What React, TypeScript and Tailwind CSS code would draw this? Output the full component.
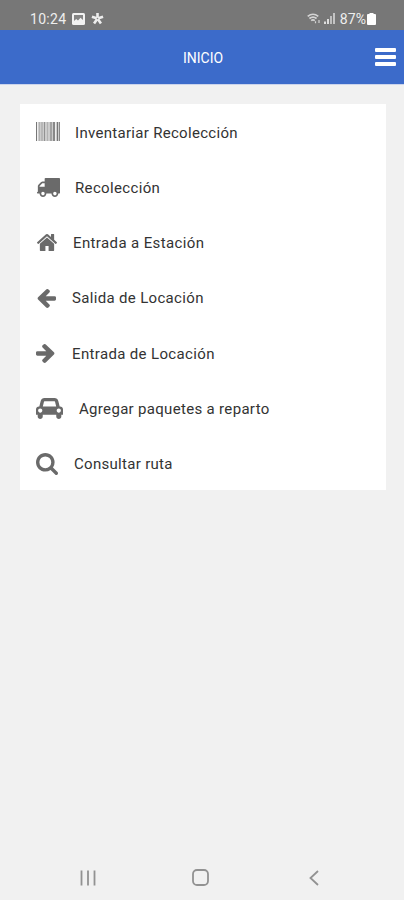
import React from "react";

type IconProps = { viewBox: string; d: string; className: string };

function Glyph({ viewBox, d, className }: IconProps) {
  return (
    <svg viewBox={viewBox} preserveAspectRatio="none" fill="currentColor" className={className}>
      <path d={d} />
    </svg>
  );
}

const TRUCK =
  "M640 1408q0-52-38-90t-90-38-90 38-38 90 38 90 90 38 90-38 38-90zm-384-512h384v-256h-158q-13 0-22 9l-195 195q-9 9-9 22v30zm1280 512q0-52-38-90t-90-38-90 38-38 90 38 90 90 38 90-38 38-90zm256-1088v1024q0 15-4 26.5t-13.5 18.5-16.5 11.5-23.5 6-22.5 2-25.5 0-22.5-.5q0 106-75 181t-181 75-181-75-75-181h-384q0 106-75 181t-181 75-181-75-75-181h-64q-3 0-22.5.5t-25.5 0-22.5-2-23.5-6-16.5-11.5-13.5-18.5-4-26.5q0-26 19-45t45-19v-320q0-8-.5-35t0-38 2.5-34.5 6.5-37 14-30.5 22.5-30l198-198q19-19 50.5-32t58.5-13h160v-192q0-26 19-45t45-19h1024q26 0 45 19t19 45z";
const HOME =
  "M1472 992v480q0 26-19 45t-45 19h-384v-384h-256v384h-384q-26 0-45-19t-19-45v-480q0-1 .5-3t.5-3l575-474 575 474q1 2 1 6zm223-69l-62 74q-8 9-21 11h-3q-13 0-21-7l-692-577-692 577q-12 8-24 7-13-2-21-11l-62-74q-8-10-7-23.5t11-21.5l719-599q32-26 76-26t76 26l244 204v-195q0-14 9-23t23-9h192q14 0 23 9t9 23v408l219 182q10 8 11 21.5t-7 23.5z";
const ARROW =
  "M1664 896v128q0 53-32.5 90.5t-84.5 37.5h-704l293 294q38 36 38 90t-38 90l-75 76q-37 37-90 37-52 0-91-37l-651-652q-37-37-37-90 0-52 37-91l651-650q38-38 91-38 52 0 90 38l75 74q38 38 38 91t-38 91l-293 293h704q52 0 84.5 37.5t32.5 90.5z";
const CAR =
  "M480 1088q0-66-47-113t-113-47-113 47-47 113 47 113 113 47 113-47 47-113zm36-320h1016l-89-357q-2-8-14-17.5t-21-9.5h-768q-9 0-21 9.5t-14 17.5zm1372 320q0-66-47-113t-113-47-113 47-47 113 47 113 113 47 113-47 47-113zm160-96v384q0 14-9 23t-23 9h-96v128q0 80-56 136t-136 56-136-56-56-136v-128h-1024v128q0 80-56 136t-136 56-136-56-56-136v-128h-96q-14 0-23-9t-9-23v-384q0-93 65.5-158.5t158.5-65.5h28l105-419q23-94 104-157.5t179-63.5h768q98 0 179 63.5t104 157.5l105 419h28q93 0 158.5 65.5t65.5 158.5z";
const SEARCH =
  "M1216 832q0-185-131.5-316.5t-316.5-131.5-316.5 131.5-131.5 316.5 131.5 316.5 316.5 131.5 316.5-131.5 131.5-316.5zm512 832q0 52-38 90t-90 38q-54 0-90-38l-343-342q-179 124-399 124-143 0-273.5-55.5t-225-150-150-225-55.5-273.5 55.5-273.5 150-225 225-150 273.5-55.5 273.5 55.5 225 150 150 225 55.5 273.5q0 220-124 399l343 343q37 37 37 90z";

function Barcode() {
  return (
    <svg viewBox="0 0 24 19" className="h-[19px] w-6">
      <rect width="24" height="19" fill="#cccccc" />
      <g fill="#777777">
        <rect width="1" height="19" />
        <rect x="3" width="1" height="19" opacity=".3" />
        <rect x="5" width="2" height="19" opacity=".25" />
        <rect x="8" width="1" height="19" opacity=".7" />
        <rect x="11" width="1" height="19" opacity=".3" />
        <rect x="14" width="2" height="19" opacity=".5" />
        <rect x="17" width="2" height="19" opacity=".8" />
        <rect x="21" width="1" height="19" />
        <rect x="23" width="1" height="19" opacity=".8" />
      </g>
      <rect x="1" width="1" height="19" fill="#f0f0f0" />
      <rect x="19" width="1" height="19" fill="#eeeeee" />
    </svg>
  );
}

const items: { label: string; icon: React.ReactNode; text: string }[] = [
  { label: "Inventariar Recolección", icon: <Barcode />, text: "ml-[15px] tracking-[0.3px]" },
  {
    label: "Recolección",
    icon: <Glyph viewBox="64 256 1728 1408" d={TRUCK} className="mt-[2px] ml-px h-[19px] w-[23px]" />,
    text: "ml-[15px] tracking-[0.35px]",
  },
  {
    label: "Entrada a Estación",
    icon: <Glyph viewBox="89 253 1614 1283" d={HOME} className="mt-px ml-px h-[17px] w-5" />,
    text: "ml-4 tracking-[0.38px]",
  },
  {
    label: "Salida de Locación",
    icon: <Glyph viewBox="64 182 1600 1562" d={ARROW} className="mt-[3px] h-[19px] w-5" />,
    text: "ml-4 tracking-[0.33px]",
  },
  {
    label: "Entrada de Locación",
    icon: <Glyph viewBox="64 182 1600 1562" d={ARROW} className="mt-[2px] h-[19px] w-5 -scale-x-100" />,
    text: "ml-4 tracking-[0.35px]",
  },
  {
    label: "Agregar paquetes a reparto",
    icon: <Glyph viewBox="0 128 2048 1600" d={CAR} className="mt-[2px] h-[21px] w-[27px]" />,
    text: "ml-4 tracking-[0.32px]",
  },
  {
    label: "Consultar ruta",
    icon: <Glyph viewBox="64 128 1664 1664" d={SEARCH} className="mt-[3px] h-[22px] w-[22px]" />,
    text: "ml-4 tracking-[0.3px]",
  },
];

export default function App() {
  return (
    <div className="flex h-[900px] w-[404px] flex-col overflow-hidden bg-[#f1f1f1] font-[Roboto,sans-serif]">
      <div className="flex h-[30px] items-center justify-between bg-[#777777] pt-[7px] pr-7 pl-[30px] text-[14px] leading-4 text-[#eeeeee]">
        <div className="flex items-center">
          <span className="tracking-[0.3px]">10:24</span>
          <svg viewBox="0 0 13 12" className="ml-[6px] h-3 w-[13px]">
            <rect width="13" height="12" rx="1.5" fill="#f2f2f2" />
            <path d="M2 2h9v5L8.5 4.7 6 7.5 4.2 6 2 8z" fill="#858585" />
            <path d="M2.5 9.5 4.5 7.5 6 9l2.5-3 2.5 3.5z" fill="#f2f2f2" />
          </svg>
          <svg viewBox="0 0 14 14" className="ml-[6px] h-[13px] w-[13px]" stroke="#eeeeee" strokeWidth="2.8">
            <path d="M7 7V1M7 7 1 5M7 7l6-2M7 7l-3.7 5.3M7 7l3.7 5.3" />
            <circle cx="7" cy="7" r=".9" fill="#888888" stroke="none" />
          </svg>
        </div>
        <div className="flex items-center">
          <svg viewBox="0 0 16 12" className="h-3 w-4" fill="none" stroke="#d4d4d4" strokeWidth="1.7">
            <path d="M.7 3.3Q6 -.8 11.3 3.3M2.4 5.5Q6 2.7 9.6 5.5M4.2 7.7Q6 6.2 7.8 7.7" />
            <path d="M8.5 8.2v2M12 7v3" strokeWidth="1.2" />
          </svg>
          <svg viewBox="0 0 11 11" className="ml-px h-[11px] w-[11px]" fill="#dddddd">
            <rect y="8.5" width="2" height="2.5" />
            <rect x="3" y="6" width="2" height="5" />
            <rect x="6" y="3" width="2" height="8" opacity=".7" />
            <rect x="9" width="2" height="11" opacity=".75" />
          </svg>
          <span className="ml-[5px] tracking-[0.1px]">87%</span>
          <svg viewBox="0 0 9 12" className="ml-px h-3 w-[9px]" fill="#ffffff">
            <rect x="2.5" width="4" height="2" />
            <rect y="1" width="9" height="11" rx="1" />
          </svg>
        </div>
      </div>

      <header className="grid h-[54px] grid-cols-[1fr_auto_1fr] items-center bg-[#3c6bca] pr-2 pl-[10px] text-white">
        <span />
        <h1 className="pt-[2px] text-[14px] leading-4">INICIO</h1>
        <button aria-label="Menú" className="flex flex-col gap-[3px] justify-self-end">
          <span className="h-1 w-[21px] rounded-[1px] bg-white" />
          <span className="h-1 w-[21px] rounded-[1px] bg-white" />
          <span className="h-1 w-[21px] rounded-[1px] bg-white" />
        </button>
      </header>
      <div className="h-px bg-[#cbd4ec]" />

      <main className="flex-1 pt-[19px] pr-[18px] pl-5">
        <ul className="flex h-[386px] flex-col bg-white">
          {items.map((item) => (
            <li key={item.label} className="flex flex-1 items-center pl-4 text-[#6a6a6a]">
              {item.icon}
              <span className={`${item.text} pt-[3px] text-[15px] leading-5 whitespace-nowrap text-[#333333]`}>
                {item.label}
              </span>
            </li>
          ))}
        </ul>
      </main>

      <nav className="flex h-[45px] items-center pl-20 text-[#929292]">
        <svg viewBox="0 0 16 16" className="h-4 w-4" stroke="currentColor" strokeWidth="1.8">
          <path d="M1.5.5v15M8 .5v15M14.5.5v15" />
        </svg>
        <svg viewBox="0 0 17 17" className="ml-24 h-[17px] w-[17px]" fill="none" stroke="currentColor" strokeWidth="1.8">
          <rect x="1" y="1" width="15" height="15" rx="4" />
        </svg>
        <svg viewBox="0 0 10 16" className="ml-[100px] h-4 w-[10px]" fill="none" stroke="currentColor" strokeWidth="1.8">
          <path d="M9 1 1.5 8 9 15" />
        </svg>
      </nav>
    </div>
  );
}
